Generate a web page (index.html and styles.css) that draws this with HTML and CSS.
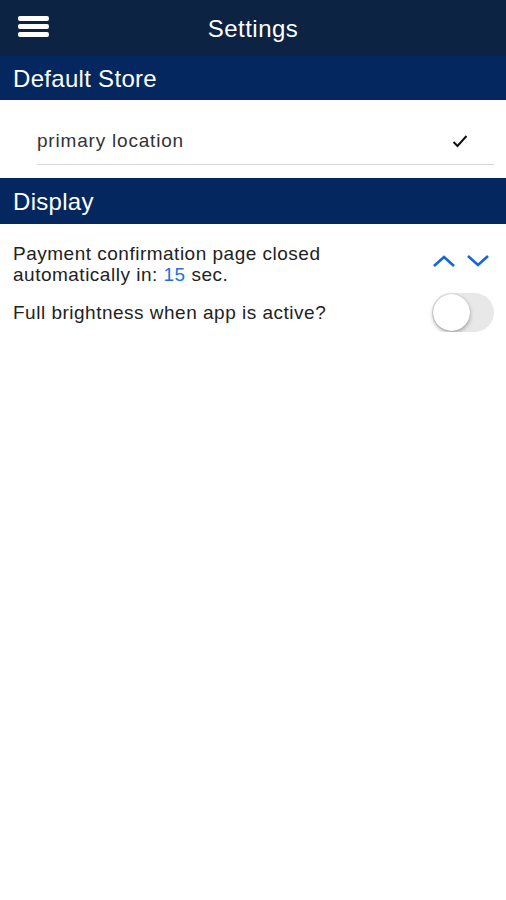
FILE: index.html
```html
<!DOCTYPE html>
<html lang="en">
<head>
    <meta charset="UTF-8">
    <meta name="viewport" content="width=device-width, initial-scale=1.0">
    <title>Settings</title>
    <link rel="stylesheet" href="styles.css">
</head>
<body>

    <!-- Top Bar -->
    <div class="topbar">
        <button class="menu-btn" aria-label="Menu">
            <span></span><span></span><span></span>
        </button>
        <h1>Settings</h1>
    </div>

    <!-- Default Store -->
    <div class="section-title">Default Store</div>
    <div class="store-list">
        <div class="store-row">
            <span>primary location</span>
            <svg class="check" width="16" height="14" viewBox="0 0 16 14">
                <path d="M1.5 8 L5.5 12 L14.5 2" fill="none" stroke="#111" stroke-width="2"/>
            </svg>
        </div>
    </div>

    <!-- Display -->
    <div class="section-title display-title">Display</div>
    <div class="setting-row">
        <p>Payment confirmation page closed<br>automatically in: <span class="value">15</span> sec.</p>
        <div class="steppers">
            <svg width="24" height="14" viewBox="0 0 24 14">
                <path d="M2 12 L12 3 L22 12" fill="none" stroke="#1764e0" stroke-width="2.6"/>
            </svg>
            <svg width="24" height="14" viewBox="0 0 24 14">
                <path d="M2 2 L12 11 L22 2" fill="none" stroke="#1764e0" stroke-width="2.6"/>
            </svg>
        </div>
    </div>
    <div class="setting-row toggle-row">
        <p>Full brightness when app is active?</p>
        <div class="switch"><div class="knob"></div></div>
    </div>

</body>
</html>
```

FILE: styles.css
```css
body {
    font-family: 'Liberation Sans', Arial, sans-serif;
    background-color: #fff;
    color: #222;
    margin: 0;
    padding: 0;
}
.topbar {
    height: 56px;
    background-color: #0c2343;
    display: flex;
    align-items: center;
    position: relative;
}
.topbar h1 {
    flex: 1;
    margin: 0;
    text-align: center;
    font-size: 24px;
    letter-spacing: 0.5px;
    font-weight: normal;
    color: #fff;
    padding-top: 1px;
}
.menu-btn {
    position: absolute;
    left: 18px;
    top: 16px;
    width: 31px;
    padding: 0;
    border: none;
    background: none;
    display: flex;
    flex-direction: column;
    gap: 3.5px;
}
.menu-btn span {
    display: block;
    height: 4.5px;
    background: #fff;
    border-radius: 2px;
}
.section-title {
    background-color: #05275f;
    color: #fff;
    font-size: 24px;
    letter-spacing: 0.3px;
    height: 44px;
    line-height: 45px;
    padding-left: 13px;
}
.display-title {
    height: 46px;
    line-height: 48px;
}
.store-list {
    padding: 0 12px 13px 37px;
}
.store-row {
    display: flex;
    justify-content: space-between;
    align-items: center;
    height: 65px;
    padding-top: 17px;
    box-sizing: border-box;
    border-bottom: 1.5px solid #d6d6d6;
    font-size: 19px;
    letter-spacing: 0.8px;
    color: #333;
}
.check {
    margin-right: 26px;
}
.setting-row {
    display: flex;
    justify-content: space-between;
    align-items: center;
    padding: 19px 12px 0 13px;
}
.setting-row p {
    margin: 0;
    font-size: 19px;
    letter-spacing: 0.5px;
    line-height: 21px;
    color: #222;
}
.value {
    color: #1f6fe0;
}
.steppers {
    display: flex;
    gap: 10px;
    margin-right: 4px;
    margin-top: -6px;
}
.toggle-row {
    padding-top: 8px;
}
.switch {
    width: 62px;
    height: 39px;
    border-radius: 20px;
    background: #e8e8e8;
    display: flex;
    align-items: center;
}
.knob {
    width: 37px;
    height: 37px;
    border-radius: 50%;
    background: #fff;
    margin-left: 1px;
    box-shadow: 0 2px 4px rgba(0, 0, 0, 0.3), 0 0 1px rgba(0, 0, 0, 0.3);
}
```
